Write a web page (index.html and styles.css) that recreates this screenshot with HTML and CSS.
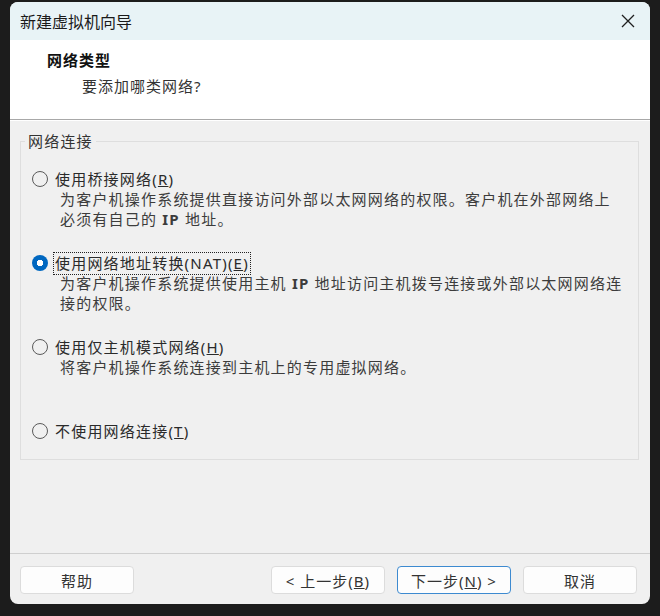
FILE: index.html
```html
<!DOCTYPE html>
<html>
<head>
    <title>新建虚拟机向导</title>
    <link rel="stylesheet" href="styles.css">
</head>
<body>
    <!-- Wizard window -->
    <div class="window">
        <!-- Title bar -->
        <div class="titlebar">
            <span class="title">新建虚拟机向导</span>
            <span class="close">
                <svg width="14" height="14" viewBox="0 0 14 14">
                    <path d="M1 1 L13 13 M13 1 L1 13" stroke="#1f1f1f" stroke-width="1.3" fill="none"/>
                </svg>
            </span>
        </div>

        <!-- Page header -->
        <div class="header">
            <div class="header-title">网络类型</div>
            <div class="header-sub">要添加哪类网络?</div>
        </div>

        <!-- Network options -->
        <div class="content">
            <fieldset class="group">
                <legend>网络连接</legend>

                <div class="option">
                    <div class="option-row">
                        <span class="radio"></span>
                        <span class="label">使用桥接网络(<u>R</u>)</span>
                    </div>
                    <div class="desc">为客户机操作系统提供直接访问外部以太网网络的权限。客户机在外部网络上<br>必须有自己的 <b>IP</b> 地址。</div>
                </div>

                <div class="option">
                    <div class="option-row">
                        <span class="radio checked"></span>
                        <span class="label focused">使用网络地址转换(NAT)(<u>E</u>)</span>
                    </div>
                    <div class="desc">为客户机操作系统提供使用主机 <b>IP</b> 地址访问主机拨号连接或外部以太网网络连<br>接的权限。</div>
                </div>

                <div class="option">
                    <div class="option-row">
                        <span class="radio"></span>
                        <span class="label">使用仅主机模式网络(<u>H</u>)</span>
                    </div>
                    <div class="desc">将客户机操作系统连接到主机上的专用虚拟网络。</div>
                </div>

                <div class="option">
                    <div class="option-row">
                        <span class="radio"></span>
                        <span class="label">不使用网络连接(<u>T</u>)</span>
                    </div>
                </div>
            </fieldset>
        </div>

        <!-- Button row -->
        <div class="footer">
            <button class="btn">帮助</button>
            <div class="btn-group">
                <button class="btn">&lt; 上一步(<u>B</u>)</button>
                <button class="btn primary">下一步(<u>N</u>) &gt;</button>
                <button class="btn">取消</button>
            </div>
        </div>
    </div>
</body>
</html>
```

FILE: styles.css
```css
/* Page behind the window */
body {
    margin: 0;
    background-color: #1c1c1c;
    font-family: "Noto Sans", "Noto Sans CJK SC", sans-serif;
    font-size: 15px;
    color: #2a2a2a;
}

/* Window frame */
.window {
    margin: 2px 0 0 10px;
    width: 640px;
    height: 602px;
    border-radius: 8px;
    overflow: hidden;
    background-color: #f0f0f0;
    display: flex;
    flex-direction: column;
}

/* Title bar */
.titlebar {
    height: 38px;
    background-color: #e8f3f6;
    display: flex;
    align-items: center;
    justify-content: space-between;
    padding: 0 15px 0 10px;
}

.title {
    font-size: 16px;
    color: #1a1a1a;
}

.close {
    display: flex;
    margin-top: -1px;
}

/* White header area */
.header {
    height: 80px;
    box-sizing: border-box;
    background-color: #fff;
    border-bottom: 1px solid #a8a8a8;
    box-shadow: 0 1px 0 #fff;
    padding: 10px 0 0 37px;
    letter-spacing: 1px;
}

.header-title {
    font-weight: bold;
    line-height: 20px;
    color: #111;
}

.header-sub {
    margin: 6px 0 0 35px;
    line-height: 20px;
    color: #333;
}

/* Main content with group box */
.content {
    flex: 1;
    padding: 11px 11px 0 10px;
}

.group {
    margin: 0;
    padding: 18px 0 18px 11px;
    border: 1px solid #dedede;
    letter-spacing: 1.2px;
}

.group legend {
    margin-left: -7px;
    padding: 0 3px;
    line-height: 20px;
    color: #333;
}

/* One radio option */
.option {
    height: 84px;
}

.option:last-child {
    height: auto;
}

.option-row {
    display: flex;
    align-items: center;
    height: 20px;
}

.radio {
    width: 16px;
    height: 16px;
    box-sizing: border-box;
    border: 1px solid #5a5a5a;
    border-radius: 50%;
    margin-right: 6px;
}

.radio.checked {
    border: none;
    background: radial-gradient(circle, #fff 0 3px, #0067c0 3.5px);
}

.label {
    padding: 1px 1px;
    line-height: 19px;
    color: #2a2a2a;
}

.label.focused {
    outline: 1px dotted #222;
}

.desc {
    margin-left: 28px;
    line-height: 20px;
    color: #3c3c3c;
}

/* Button row */
.footer {
    height: 51px;
    box-sizing: border-box;
    border-top: 1px solid #cfcfcf;
    display: flex;
    justify-content: space-between;
    padding: 12px 13px 0 10px;
}

.btn-group {
    display: flex;
    gap: 12px;
}

.btn {
    width: 114px;
    height: 28px;
    border: 1px solid #dcdcdc;
    border-radius: 4px;
    background-color: #fdfdfd;
    font-family: inherit;
    font-size: 15px;
    color: #333;
    letter-spacing: 1px;
    padding: 0;
}

.btn.primary {
    border-color: #3d8ad0;
}
```
